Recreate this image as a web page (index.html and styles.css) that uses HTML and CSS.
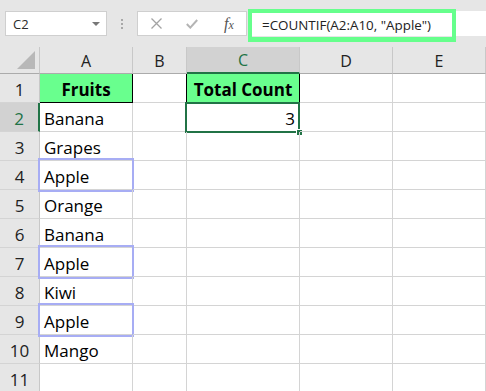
FILE: index.html
```html
<!DOCTYPE html>
<html>
<head>
<meta charset="utf-8">
<link rel="stylesheet" href="styles.css">
</head>
<body>
<div class="toolbar">
  <div class="namebox"><span class="ref">C2</span><span class="caret"></span></div>
  <div class="dots"><i></i><i></i><i></i></div>
  <div class="fxbox">
    <svg class="ic-x" width="11" height="11" viewBox="0 0 11 11"><path d="M0.5 0.5 L10.5 10.5 M10.5 0.5 L0.5 10.5" stroke="#a3a3a3" stroke-width="1.3" fill="none"/></svg>
    <svg class="ic-check" width="12" height="10" viewBox="0 0 12 10"><path d="M0.8 5 L4.3 8.6 L11.2 1" stroke="#b4b4b4" stroke-width="2" fill="none"/></svg>
    <span class="fx">f<span class="x">x</span></span>
  </div>
  <div class="formula">
    <div class="hl"><span>=COUNTIF(A2:A10, "Apple")</span></div>
  </div>
</div>
<div class="sheet">
  <div class="corner"><span class="tri"></span></div>
  <div class="ch">A</div>
  <div class="ch">B</div>
  <div class="ch sel">C</div>
  <div class="ch">D</div>
  <div class="ch">E</div>

  <div class="rh">1</div>
  <div class="c head a1">Fruits</div>
  <div class="c b1"></div>
  <div class="c head c1">Total Count</div>
  <div class="c"></div>
  <div class="c"></div>

  <div class="rh sel">2</div>
  <div class="c">Banana</div>
  <div class="c"></div>
  <div class="c num active">3<span class="selbox"><span class="handle"></span></span></div>
  <div class="c"></div>
  <div class="c"></div>

  <div class="rh">3</div>
  <div class="c">Grapes</div>
  <div class="c"></div><div class="c"></div><div class="c"></div><div class="c"></div>

  <div class="rh">4</div>
  <div class="c mark">Apple<span class="markbox"></span></div>
  <div class="c"></div><div class="c"></div><div class="c"></div><div class="c"></div>

  <div class="rh">5</div>
  <div class="c">Orange</div>
  <div class="c"></div><div class="c"></div><div class="c"></div><div class="c"></div>

  <div class="rh">6</div>
  <div class="c">Banana</div>
  <div class="c"></div><div class="c"></div><div class="c"></div><div class="c"></div>

  <div class="rh">7</div>
  <div class="c mark">Apple<span class="markbox"></span></div>
  <div class="c"></div><div class="c"></div><div class="c"></div><div class="c"></div>

  <div class="rh">8</div>
  <div class="c">Kiwi</div>
  <div class="c"></div><div class="c"></div><div class="c"></div><div class="c"></div>

  <div class="rh">9</div>
  <div class="c mark">Apple<span class="markbox"></span></div>
  <div class="c"></div><div class="c"></div><div class="c"></div><div class="c"></div>

  <div class="rh">10</div>
  <div class="c">Mango</div>
  <div class="c"></div><div class="c"></div><div class="c"></div><div class="c"></div>

  <div class="rh">11</div>
  <div class="c"></div><div class="c"></div><div class="c"></div><div class="c"></div><div class="c"></div>
</div>
</body>
</html>
```
FILE: styles.css
```css
* { box-sizing: border-box; }
html, body { margin: 0; padding: 0; }
body {
  width: 486px;
  height: 391px;
  overflow: hidden;
  background: #ffffff;
  font-family: "Open Sans", "Noto Sans", sans-serif;
  color: #000;
}

.toolbar {
  height: 47px;
  background: #e6e6e6;
  display: flex;
  align-items: flex-start;
  padding-top: 11px;
}
.namebox {
  margin-left: 5px;
  width: 102px;
  height: 25px;
  background: #fff;
  border: 1px solid #cfcfcf;
  display: flex;
  align-items: center;
  justify-content: space-between;
  padding: 0 6px 0 7px;
}
.ref { font-size: 13px; color: #2b2b2b; }
.caret {
  width: 0; height: 0;
  border-left: 4px solid transparent;
  border-right: 4px solid transparent;
  border-top: 4px solid #777;
}
.dots {
  width: 30px;
  height: 25px;
  display: flex;
  flex-direction: column;
  align-items: center;
  justify-content: center;
  gap: 2px;
}
.dots i {
  display: block;
  width: 2px;
  height: 2px;
  background: #a8a8a8;
}
.fxbox {
  width: 110px;
  height: 25px;
  background: #fff;
  border: 1px solid #cfcfcf;
  display: flex;
  align-items: center;
  padding-left: 13px;
}
.ic-x { margin-right: 24px; }
.ic-check { margin-right: 26px; }
.fx {
  font-family: "Liberation Serif", serif;
  font-style: italic;
  font-size: 16px;
  color: #555;
  line-height: 1;
}
.fx .x { font-size: 12px; }
.formula {
  flex: 1;
  margin-left: 1px;
  height: 25px;
  background: #fff;
  position: relative;
}
.hl {
  position: absolute;
  left: 0;
  top: -2px;
  width: 208px;
  height: 33px;
  border: 4px solid #66ff8c;
  border-bottom-width: 5px;
  display: flex;
  align-items: center;
  padding-left: 10px;
  font-size: 13.4px;
  color: #222;
  white-space: nowrap;
}

.sheet {
  display: grid;
  grid-template-columns: 40px 93px 54px 113px 93px 1fr;
  grid-template-rows: 27px repeat(11, 29px);
}
.corner {
  background: #e6e6e6;
  border-right: 1px solid #c8c8c8;
  border-bottom: 1px solid #ababab;
  position: relative;
}
.tri {
  position: absolute;
  right: 4px;
  bottom: 4px;
  width: 0; height: 0;
  border-left: 18px solid transparent;
  border-bottom: 18px solid #b8b8b8;
}
.ch {
  background: #e6e6e6;
  border-right: 1px solid #c8c8c8;
  border-bottom: 1px solid #ababab;
  display: flex;
  align-items: center;
  justify-content: center;
  font-size: 16px;
  color: #222;
  padding-top: 1px;
}
.ch.sel {
  background: #d2d2d2;
  color: #217346;
  border-bottom: 2px solid #217346;
}
.rh {
  background: #e6e6e6;
  border-right: 1px solid #c8c8c8;
  border-bottom: 1px solid #d4d4d4;
  display: flex;
  align-items: center;
  justify-content: center;
  font-size: 17px;
  color: #222;
  padding-top: 2px;
}
.rh.sel {
  background: #d2d2d2;
  color: #217346;
  border-right: 2px solid #217346;
}
.c {
  border-right: 1px solid #d4d4d4;
  border-bottom: 1px solid #d4d4d4;
  display: flex;
  align-items: center;
  padding: 3px 4px 0 4px;
  font-size: 17px;
  white-space: nowrap;
  position: relative;
}
.c.head {
  background: #69ff8e;
  font-weight: bold;
  justify-content: center;
  padding-left: 0;
  padding-right: 0;
}
.a1 {
  border-right-color: #000;
  border-bottom-color: #000;
}
.b1 { border-right-color: #000; }
.c1 { border-right-color: #000; }
.num { justify-content: flex-end; }
.selbox {
  position: absolute;
  top: -1px;
  left: -2px;
  right: -1px;
  bottom: -2px;
  border: 2px solid #217346;
}
.handle {
  position: absolute;
  right: -5px;
  bottom: -5px;
  width: 7px;
  height: 7px;
  background: #217346;
  border: 1px solid #fff;
}
.markbox {
  position: absolute;
  top: -3px;
  left: -2px;
  right: -2px;
  bottom: -3px;
  border: 2px solid #a7adf4;
}
```
